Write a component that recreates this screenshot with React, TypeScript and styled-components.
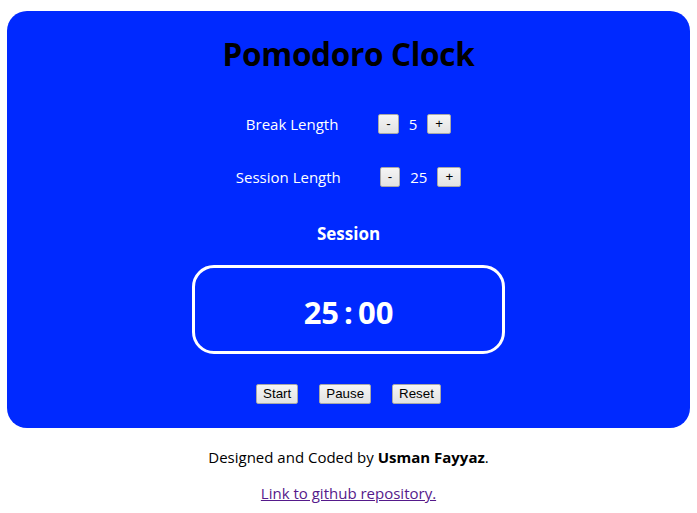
import React, { useState } from "react";
import styled, { createGlobalStyle } from "styled-components";

const Global = createGlobalStyle`
  html, body { margin: 0; padding: 0; background: #ffffff; }
  body { font-family: "Open Sans", "Noto Sans", sans-serif; }
`;

const Page = styled.div`
  display: flex;
  flex-direction: column;
  align-items: center;
  padding: 11px 7px 0 7px;
`;

const Panel = styled.main`
  box-sizing: border-box;
  width: 683px;
  background: #0029ff;
  border-radius: 20px;
  padding: 23px 0 24px;
  display: flex;
  flex-direction: column;
  align-items: center;
  color: #ffffff;
`;

const Title = styled.h1`
  margin: 0;
  font-size: 31.5px;
  line-height: 40px;
  font-weight: 700;
  color: #000000;
  letter-spacing: -0.3px;
`;

const Row = styled.div<{ $top: number; $gap: number }>`
  display: flex;
  align-items: center;
  gap: ${(p) => p.$gap}px;
  margin-top: ${(p) => p.$top}px;
  height: 20px;
`;

const Label = styled.span`
  font-size: 15px;
  line-height: 20px;
`;

const Controls = styled.div`
  display: flex;
  align-items: center;
`;

const Value = styled.span`
  font-size: 15px;
  line-height: 20px;
  margin: 0 10px;
`;

const Btn = styled.button`
  box-sizing: border-box;
  height: 20px;
  padding: 0 6px;
  font-family: "Liberation Sans", Arial, sans-serif;
  font-size: 13.33px;
  line-height: 16px;
  color: #000;
  background: linear-gradient(#f5f5f5, #e2e2e2);
  border: 1px solid #a8a8a8;
  border-radius: 2px;
  cursor: pointer;
`;

const SmallBtn = styled(Btn)`
  padding: 0 7px;
  min-width: 20px;
`;

const Status = styled.h2`
  margin: 35px 0 0;
  font-size: 17px;
  line-height: 24px;
  font-weight: 700;
`;

const TimerBox = styled.div`
  box-sizing: border-box;
  margin-top: 19px;
  width: 313px;
  height: 89px;
  padding-top: 5px;
  border: 3px solid #ffffff;
  border-radius: 22px;
  display: flex;
  align-items: center;
  justify-content: center;
`;

const Time = styled.span`
  font-size: 31px;
  font-weight: 700;
  line-height: 40px;
  display: flex;
  align-items: center;
`;

const Colon = styled.span`
  margin: 0 5px;
`;

const Actions = styled.div`
  margin-top: 30px;
  display: flex;
  gap: 21px;
`;

const Footer = styled.footer`
  display: flex;
  flex-direction: column;
  align-items: center;
  margin-top: 19px;
  font-size: 15px;
  line-height: 20px;
  color: #000;
`;

const Link = styled.a`
  margin-top: 16px;
  color: #551a8b;
  text-decoration: underline;
`;

export default function App() {
  const [brk, setBrk] = useState(5);
  const [ses, setSes] = useState(25);
  const mm = String(ses).padStart(2, "0");
  return (
    <>
      <Global />
      <Page>
        <Panel>
          <Title>Pomodoro Clock</Title>
          <Row $top={40} $gap={40}>
            <Label>Break Length</Label>
            <Controls>
              <SmallBtn onClick={() => setBrk(Math.max(1, brk - 1))}>-</SmallBtn>
              <Value>{brk}</Value>
              <SmallBtn onClick={() => setBrk(Math.min(60, brk + 1))}>+</SmallBtn>
            </Controls>
          </Row>
          <Row $top={33} $gap={39}>
            <Label>Session Length</Label>
            <Controls>
              <SmallBtn onClick={() => setSes(Math.max(1, ses - 1))}>-</SmallBtn>
              <Value>{ses}</Value>
              <SmallBtn onClick={() => setSes(Math.min(60, ses + 1))}>+</SmallBtn>
            </Controls>
          </Row>
          <Status>Session</Status>
          <TimerBox>
            <Time>
              {mm}
              <Colon>:</Colon>
              00
            </Time>
          </TimerBox>
          <Actions>
            <Btn>Start</Btn>
            <Btn>Pause</Btn>
            <Btn>Reset</Btn>
          </Actions>
        </Panel>
        <Footer>
          <span>
            Designed and Coded by <b>Usman Fayyaz</b>.
          </span>
          <Link href="#">Link to github repository.</Link>
        </Footer>
      </Page>
    </>
  );
}
